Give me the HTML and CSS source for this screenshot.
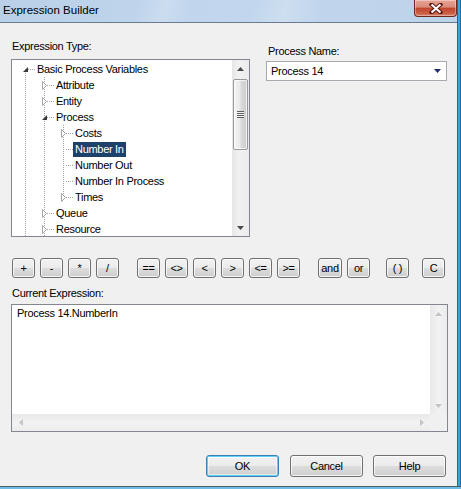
FILE: index.html
```html
<!DOCTYPE html>
<html lang="en">
<head>
  <meta charset="utf-8">
  <title>Expression Builder</title>
  <link rel="stylesheet" href="styles.css">
</head>
<body>
  <div class="window">
    <div class="frame-row">
      <div class="main">

        <div class="titlebar">
          <span class="title">Expression Builder</span>
          <button class="close" type="button" aria-label="Close">
            <svg width="14" height="11" viewBox="0 0 14 11">
              <path d="M2.5 1.5 L11.5 9.5 M11.5 1.5 L2.5 9.5" stroke="#5b1a10" stroke-width="4" stroke-linecap="square"/>
              <path d="M2.5 1.5 L11.5 9.5 M11.5 1.5 L2.5 9.5" stroke="#fff" stroke-width="2"/>
            </svg>
          </button>
        </div>

        <div class="content">
          <div class="top">
            <div class="type-col">
              <div class="label">Expression Type:</div>
              <div class="tree">
                <ul class="tree-list">
                  <li class="row">
                    <span class="node first open"><svg class="tri-open" width="5" height="5" viewBox="0 0 5 5"><path d="M5 0 L5 5 L0 5 Z" fill="#3a3a3a"/></svg></span>
                    <span class="text">Basic Process Variables</span>
                  </li>
                  <li class="row">
                    <span class="pipe"></span>
                    <span class="node"><svg class="tri" width="6" height="9" viewBox="0 0 6 9"><path d="M0.5 0.5 L4.5 4.5 L0.5 8.5 Z" fill="#fff" stroke="#a6a6a6"/></svg></span>
                    <span class="text">Attribute</span>
                  </li>
                  <li class="row">
                    <span class="pipe"></span>
                    <span class="node"><svg class="tri" width="6" height="9" viewBox="0 0 6 9"><path d="M0.5 0.5 L4.5 4.5 L0.5 8.5 Z" fill="#fff" stroke="#a6a6a6"/></svg></span>
                    <span class="text">Entity</span>
                  </li>
                  <li class="row">
                    <span class="pipe"></span>
                    <span class="node open"><svg class="tri-open" width="5" height="5" viewBox="0 0 5 5"><path d="M5 0 L5 5 L0 5 Z" fill="#3a3a3a"/></svg></span>
                    <span class="text">Process</span>
                  </li>
                  <li class="row">
                    <span class="pipe"></span>
                    <span class="pipe"></span>
                    <span class="node"><svg class="tri" width="6" height="9" viewBox="0 0 6 9"><path d="M0.5 0.5 L4.5 4.5 L0.5 8.5 Z" fill="#fff" stroke="#a6a6a6"/></svg></span>
                    <span class="text">Costs</span>
                  </li>
                  <li class="row">
                    <span class="pipe"></span>
                    <span class="pipe"></span>
                    <span class="node"></span>
                    <span class="text selected">Number In</span>
                  </li>
                  <li class="row">
                    <span class="pipe"></span>
                    <span class="pipe"></span>
                    <span class="node"></span>
                    <span class="text">Number Out</span>
                  </li>
                  <li class="row">
                    <span class="pipe"></span>
                    <span class="pipe"></span>
                    <span class="node"></span>
                    <span class="text">Number In Process</span>
                  </li>
                  <li class="row">
                    <span class="pipe"></span>
                    <span class="pipe"></span>
                    <span class="node last"><svg class="tri" width="6" height="9" viewBox="0 0 6 9"><path d="M0.5 0.5 L4.5 4.5 L0.5 8.5 Z" fill="#fff" stroke="#a6a6a6"/></svg></span>
                    <span class="text">Times</span>
                  </li>
                  <li class="row">
                    <span class="pipe"></span>
                    <span class="node"><svg class="tri" width="6" height="9" viewBox="0 0 6 9"><path d="M0.5 0.5 L4.5 4.5 L0.5 8.5 Z" fill="#fff" stroke="#a6a6a6"/></svg></span>
                    <span class="text">Queue</span>
                  </li>
                  <li class="row">
                    <span class="pipe"></span>
                    <span class="node"><svg class="tri" width="6" height="9" viewBox="0 0 6 9"><path d="M0.5 0.5 L4.5 4.5 L0.5 8.5 Z" fill="#fff" stroke="#a6a6a6"/></svg></span>
                    <span class="text">Resource</span>
                  </li>
                </ul>
                <div class="vscroll">
                  <div class="arrow"><svg width="7" height="4" viewBox="0 0 7 4"><path d="M3.5 0 L7 4 L0 4 Z" fill="#4a4a4a"/></svg></div>
                  <div class="thumb"><span class="grip"></span></div>
                  <div class="track"></div>
                  <div class="arrow"><svg width="7" height="4" viewBox="0 0 7 4"><path d="M0 0 L7 0 L3.5 4 Z" fill="#4a4a4a"/></svg></div>
                </div>
              </div>
            </div>

            <div class="name-col">
              <div class="label">Process Name:</div>
              <div class="combo">
                <span>Process 14</span>
                <svg width="7" height="4" viewBox="0 0 7 4"><path d="M0 0 L7 0 L3.5 4 Z" fill="#1f2d6e"/></svg>
              </div>
            </div>
          </div>

          <div class="ops">
            <div class="grp">
              <button class="op" type="button">+</button>
              <button class="op" type="button">-</button>
              <button class="op" type="button">*</button>
              <button class="op" type="button">/</button>
            </div>
            <div class="grp cmp">
              <button class="op" type="button">==</button>
              <button class="op" type="button">&lt;&gt;</button>
              <button class="op" type="button">&lt;</button>
              <button class="op" type="button">&gt;</button>
              <button class="op" type="button">&lt;=</button>
              <button class="op" type="button">&gt;=</button>
            </div>
            <div class="grp logic">
              <button class="op wide" type="button">and</button>
              <button class="op" type="button">or</button>
            </div>
            <div class="grp paren">
              <button class="op" type="button">( )</button>
            </div>
            <div class="grp clear">
              <button class="op" type="button">C</button>
            </div>
          </div>

          <div class="label expr-label">Current Expression:</div>
          <div class="expr">
            <div class="expr-text">Process 14.NumberIn</div>
            <div class="vscroll off">
              <div class="arrow"><svg width="7" height="4" viewBox="0 0 7 4"><path d="M3.5 0 L7 4 L0 4 Z" fill="#c4c4c4"/></svg></div>
              <div class="track"></div>
              <div class="arrow"><svg width="7" height="4" viewBox="0 0 7 4"><path d="M0 0 L7 0 L3.5 4 Z" fill="#c4c4c4"/></svg></div>
            </div>
            <div class="hscroll off">
              <div class="arrow"><svg width="4" height="7" viewBox="0 0 4 7"><path d="M4 0 L4 7 L0 3.5 Z" fill="#c4c4c4"/></svg></div>
              <div class="track"></div>
              <div class="arrow"><svg width="4" height="7" viewBox="0 0 4 7"><path d="M0 0 L4 3.5 L0 7 Z" fill="#c4c4c4"/></svg></div>
            </div>
            <div class="corner"></div>
          </div>

          <div class="actions">
            <button class="btn default" type="button">OK</button>
            <button class="btn" type="button">Cancel</button>
            <button class="btn" type="button">Help</button>
          </div>
        </div>

      </div>
      <div class="frame-right"></div>
    </div>
    <div class="frame-bottom"></div>
  </div>
</body>
</html>
```

FILE: styles.css
```css
:root {
  --face: #f0f0f0;
  --edge: #828790;
  --line: #a0a0a0;
  --select: #1c416b;
  --font: "Liberation Sans";
}

* {box-sizing: border-box}

body {
  margin: 0;
  background-color: var(--face);
  color: #000;
  font: 11px var(--font), Arial, sans-serif;
  letter-spacing: -0.3px;
}

button {
  font: inherit;
  letter-spacing: inherit;
  color: #000;
  padding: 0;
}

.window {
  display: flex;
  flex-direction: column;
  width: 461px;
  height: 489px;
}

.frame-row {
  display: flex;
  height: 486px;
}

.main {
  display: flex;
  flex-direction: column;
  width: 457px;
}

.frame-right {
  width: 4px;
  background: linear-gradient(90deg, #4f5c69 0 1px, #37a5de 1px 3px, #1b6ea6 3px);
}

.frame-bottom {
  height: 3px;
  background: linear-gradient(#4f5c69 0 1px, #6fbce6 1px);
}

/* title bar */
.titlebar {
  display: flex;
  align-items: flex-start;
  height: 23px;
  padding-left: 3px;
  border-bottom: 1px solid #6a7b8d;
  background:
    linear-gradient(105deg, transparent 0 30%, rgba(255,255,255,.18) 36%, transparent 42%,
      transparent 55%, rgba(255,255,255,.2) 62%, transparent 70%),
    linear-gradient(90deg, #b9d0e8, #c2d7ed 50%, #bdd3ea);
}

.title {
  margin-top: 4px;
  font-size: 11.5px;
  letter-spacing: 0;
}

.close {
  display: flex;
  align-items: center;
  justify-content: center;
  margin-left: auto;
  width: 43px;
  height: 17px;
  border: 1px solid #6b2a20;
  border-top: 0;
  border-radius: 0 0 4px 4px;
  background: linear-gradient(#e8a596 0%, #d98a78 45%, #c0472f 50%, #c95a40 80%, #d9826a 100%);
  box-shadow: inset 0 0 0 1px rgba(255,255,255,.35);
}

/* dialog body */
.content {
  display: flex;
  flex-direction: column;
  padding: 17px 9px 0 11px;
}

.top {display: flex}

.label {
  line-height: 13px;
  padding-left: 1px;
}

.type-col {width: 239px}
.type-col .label {margin-bottom: 6px}

.name-col {
  width: 181px;
  margin-left: 16px;
  padding-top: 5px;
}
.name-col .label {
  margin-bottom: 3px;
  padding-left: 2px;
}

/* tree view */
.tree {
  display: flex;
  height: 178px;
  border: 1px solid var(--edge);
  background-color: #fff;
}

.tree-list {
  flex: 1;
  margin: 0;
  padding: 1px 0 0 6px;
  list-style: none;
  overflow: hidden;
}

.row {
  display: flex;
  height: 16px;
}

.pipe, .node {
  position: relative;
  flex: none;
  width: 19px;
}

.pipe::before, .node::before {
  content: "";
  position: absolute;
  left: 7px;
  top: 0;
  bottom: 0;
  width: 1px;
  background: repeating-linear-gradient(var(--line) 0 1px, transparent 1px 2px);
}

.node.first::before {top: 8px}
.node.last::before {bottom: 8px}

.node::after {
  content: "";
  position: absolute;
  left: 10px;
  top: 8px;
  width: 7px;
  height: 1px;
  background: repeating-linear-gradient(90deg, var(--line) 0 1px, transparent 1px 2px);
}

.node svg {
  position: relative;
  z-index: 1;
  display: block;
}
.tri {margin: 4px 0 0 5px}
.tri-open {margin: 6px 0 0 5px}

.text {
  height: 15px;
  margin: 1px 0 0 -2px;
  padding: 0 2px;
  line-height: 15px;
  white-space: nowrap;
}

.text.selected {
  background-color: var(--select);
  color: #fff;
}

/* scroll bars */
.vscroll {
  display: flex;
  flex-direction: column;
  flex: none;
  width: 17px;
  background: linear-gradient(90deg, #e6e6e6, #f1f1f1 40%, #ececec);
}

.arrow {
  display: flex;
  align-items: center;
  justify-content: center;
  flex: none;
  width: 17px;
  height: 17px;
}

.track {flex: 1}

.thumb {
  display: flex;
  align-items: center;
  justify-content: center;
  height: 71px;
  margin: 2px 1px 0;
  border: 1px solid #999;
  border-radius: 2px;
  background: linear-gradient(90deg, #f5f5f5, #e9e9e9 45%, #d9d9d9 55%, #cdcdcd);
  box-shadow: inset 0 0 0 1px rgba(255,255,255,.7);
}

.grip {
  width: 7px;
  height: 7px;
  background: repeating-linear-gradient(#5e5e5e 0 1px, #f4f4f4 1px 2px);
}

.vscroll.off {background: linear-gradient(90deg, #e8e8e8, #f2f2f2 50%, #ececec)}

.hscroll {
  display: flex;
  background: linear-gradient(#e8e8e8, #f2f2f2 50%, #ececec);
}

.corner {background-color: var(--face)}

/* combo */
.combo {
  display: flex;
  align-items: center;
  justify-content: space-between;
  height: 20px;
  padding: 0 5px 0 4px;
  border: 1px solid #a5a9b0;
  background-color: #fff;
}

/* operator buttons */
.ops {
  display: flex;
  margin-top: 21px;
  padding-left: 1px;
}

.grp {
  display: flex;
  gap: 5px;
}
.grp.cmp {margin-left: 18px}
.grp.logic {margin-left: 18px}
.grp.paren {margin-left: 16px}
.grp.clear {margin-left: 13px}

.op, .btn {
  border: 1px solid #707070;
  border-radius: 3px;
  background: linear-gradient(#f2f2f2 0%, #ebebeb 50%, #dddddd 50%, #cfcfcf 100%);
  box-shadow: inset 0 0 0 1px rgba(252,252,252,.8);
}

.op {
  width: 23px;
  height: 20px;
}
.op.wide {width: 24px}

.expr-label {
  margin: 9px 0 4px;
}

/* current expression box */
.expr {
  display: grid;
  grid-template-columns: 1fr 17px;
  grid-template-rows: 1fr 17px;
  width: 437px;
  height: 128px;
  border: 1px solid var(--edge);
  background-color: #fff;
}

.expr-text {
  padding: 2px 5px;
  line-height: 13px;
}

/* dialog buttons */
.actions {
  display: flex;
  justify-content: flex-end;
  gap: 10px;
  margin-top: 23px;
  padding-right: 2px;
}

.btn {
  width: 73px;
  height: 22px;
}

.btn.default {
  border-color: #3c7fb1;
  box-shadow: inset 0 0 0 1px #5fd0f7, inset 0 0 0 2px rgba(255,255,255,.5);
  margin-right: 1px;
}
```
